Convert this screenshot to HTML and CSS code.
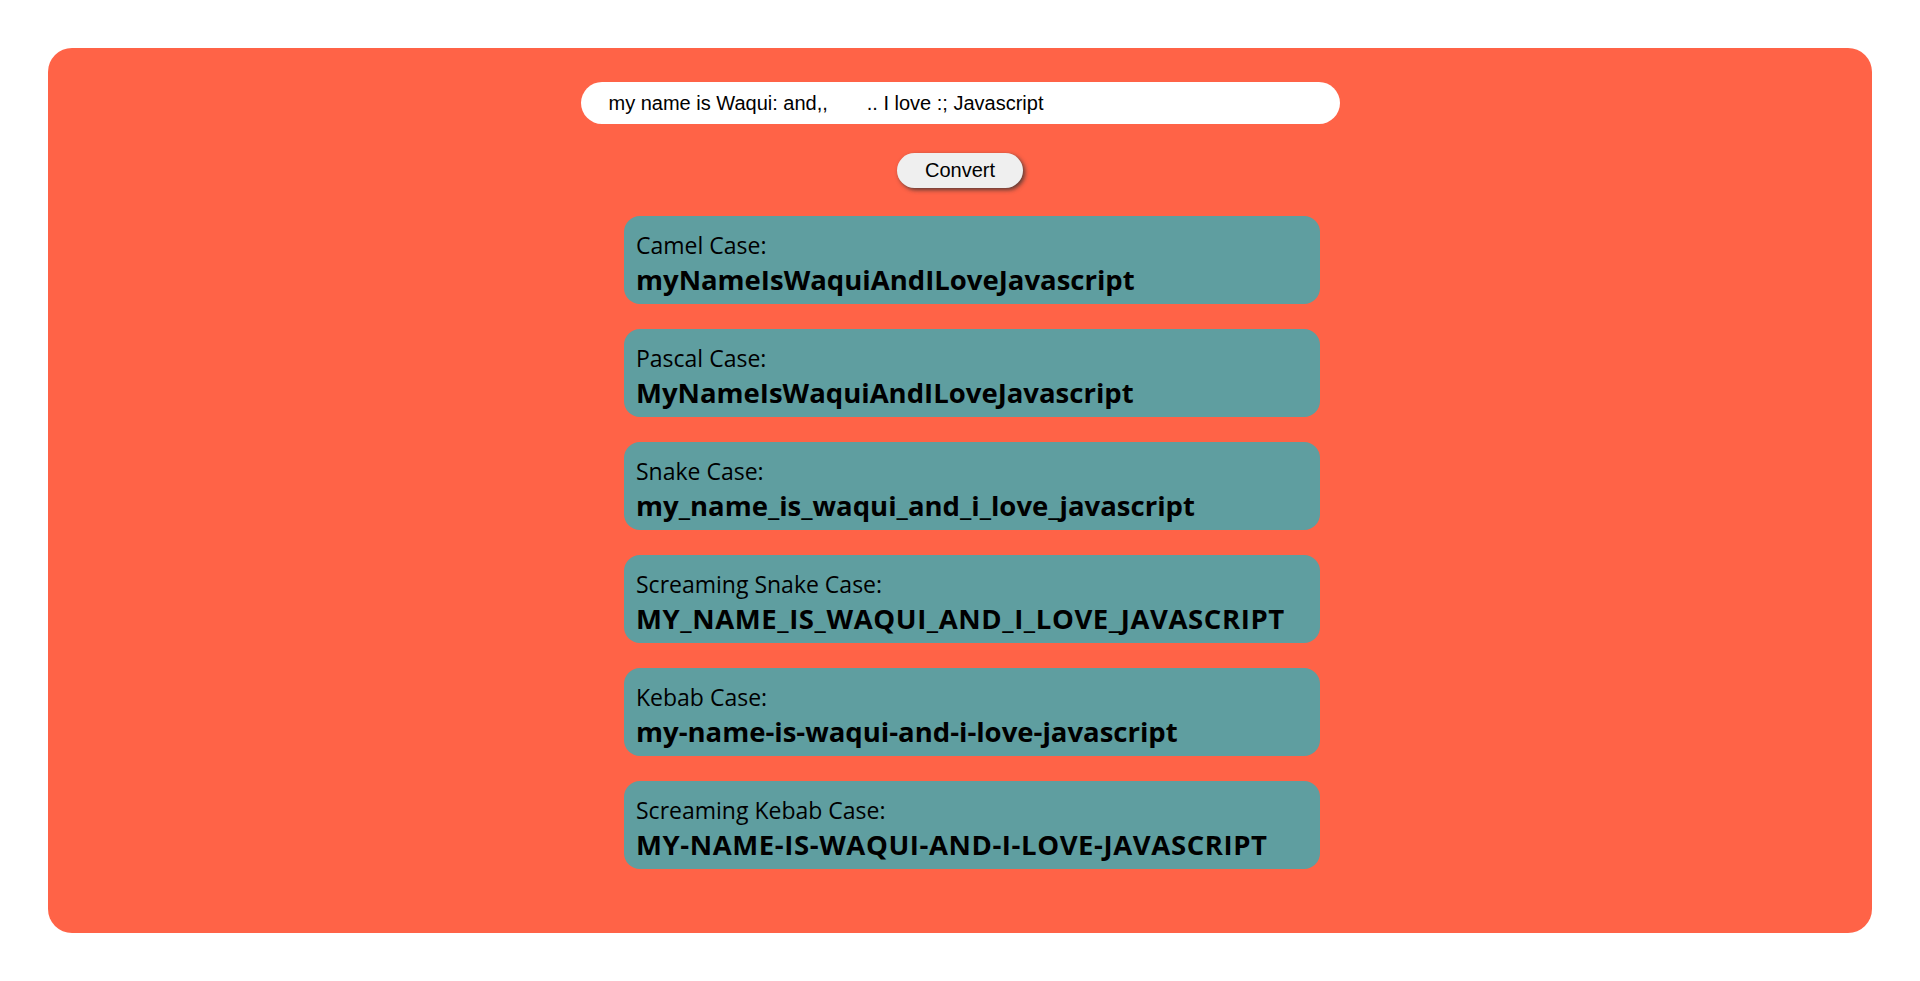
FILE: index.html
```html
<!DOCTYPE html>
<html lang="en">
<head>
<meta charset="UTF-8">
<title>Case Converter</title>
<link rel="stylesheet" href="styles.css">
</head>
<body>
<main class="panel">
  <input class="text-input" type="text" value="my name is Waqui: and,,       .. I love :; Javascript">
  <button class="convert-btn" type="button">Convert</button>
  <section class="results">
    <div class="card">
      <div class="card-label">Camel Case:</div>
      <div class="card-value">myNameIsWaquiAndILoveJavascript</div>
    </div>
    <div class="card">
      <div class="card-label">Pascal Case:</div>
      <div class="card-value">MyNameIsWaquiAndILoveJavascript</div>
    </div>
    <div class="card">
      <div class="card-label">Snake Case:</div>
      <div class="card-value">my_name_is_waqui_and_i_love_javascript</div>
    </div>
    <div class="card">
      <div class="card-label">Screaming Snake Case:</div>
      <div class="card-value upper">MY_NAME_IS_WAQUI_AND_I_LOVE_JAVASCRIPT</div>
    </div>
    <div class="card">
      <div class="card-label">Kebab Case:</div>
      <div class="card-value">my-name-is-waqui-and-i-love-javascript</div>
    </div>
    <div class="card">
      <div class="card-label">Screaming Kebab Case:</div>
      <div class="card-value upper">MY-NAME-IS-WAQUI-AND-I-LOVE-JAVASCRIPT</div>
    </div>
  </section>
</main>
</body>
</html>
```

FILE: styles.css
```css
* {
  box-sizing: border-box;
}

html, body {
  margin: 0;
  padding: 0;
  background: #ffffff;
}

body {
  padding: 48px;
  font-family: "Open Sans", "Noto Sans", sans-serif;
}

.panel {
  background: #ff6347;
  border-radius: 24px;
  padding: 34px 0 64px;
  display: flex;
  flex-direction: column;
  align-items: center;
}

.text-input {
  width: 759px;
  height: 42px;
  border: none;
  outline: none;
  border-radius: 21px;
  background: #ffffff;
  padding: 0 28px;
  font-family: "Liberation Sans", Arial, sans-serif;
  font-size: 20px;
  color: #000000;
  white-space: pre;
}

.convert-btn {
  margin-top: 29px;
  width: 126px;
  height: 35px;
  border: none;
  border-radius: 18px;
  background: #efefef;
  box-shadow: 2px 2px 4px rgba(50, 50, 50, 0.8);
  font-family: "Liberation Sans", Arial, sans-serif;
  font-size: 20px;
  color: #000000;
  padding: 0;
}

.results {
  margin-top: 28px;
  padding-left: 24px;
  display: flex;
  flex-direction: column;
  gap: 25px;
}

.card {
  width: 696px;
  height: 88px;
  background: #5f9ea0;
  border-radius: 16px;
  padding: 14px 12px 3px;
  color: #000000;
}

.card-label {
  font-size: 23px;
  line-height: 30px;
  font-weight: 400;
}

.card-value {
  font-size: 27.5px;
  line-height: 40px;
  font-weight: 700;
}

.card-value.upper {
  letter-spacing: 0.6px;
}
```
